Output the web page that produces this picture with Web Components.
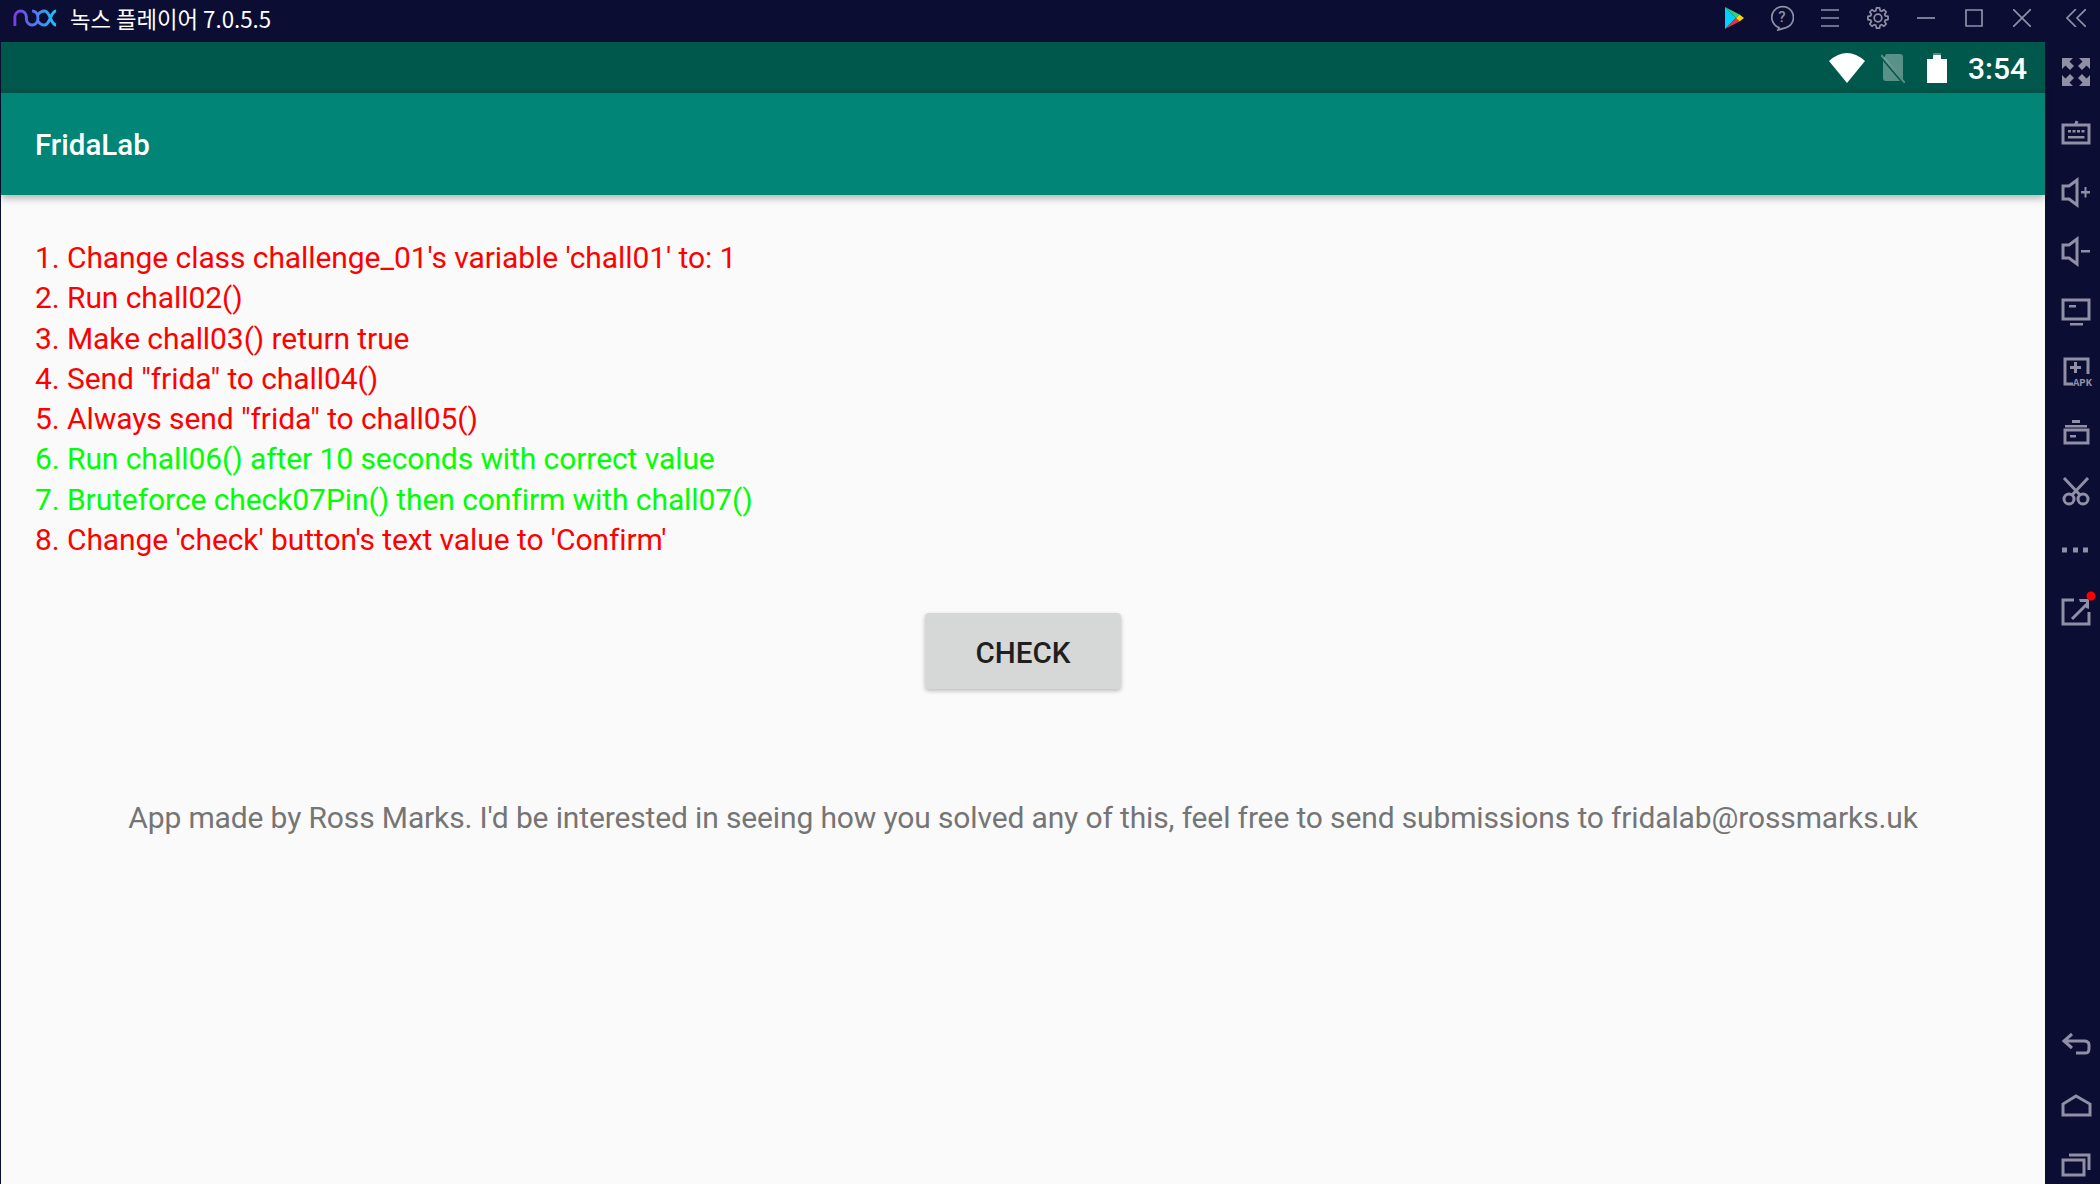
<!DOCTYPE html>
<html>
<head>
<meta charset="utf-8">
<style>
  html, body { margin: 0; height: 100%; background: #0c0d33; overflow: hidden; }
</style>
</head>
<body>
<nox-window>
  <title-bar slot="title" label="녹스 플레이어 7.0.5.5"></title-bar>
  <android-screen slot="screen">
    <status-bar time="3:54"></status-bar>
    <app-bar title="FridaLab"></app-bar>
    <lab-content>
      <challenge-line>1. Change class challenge_01's variable 'chall01' to: 1</challenge-line>
      <challenge-line>2. Run chall02()</challenge-line>
      <challenge-line>3. Make chall03() return true</challenge-line>
      <challenge-line>4. Send "frida" to chall04()</challenge-line>
      <challenge-line>5. Always send "frida" to chall05()</challenge-line>
      <challenge-line done>6. Run chall06() after 10 seconds with correct value</challenge-line>
      <challenge-line done>7. Bruteforce check07Pin() then confirm with chall07()</challenge-line>
      <challenge-line>8. Change 'check' button's text value to 'Confirm'</challenge-line>
      <span slot="note">App made by Ross Marks. I'd be interested in seeing how you solved any of this, feel free to send submissions to fridalab@rossmarks.uk</span>
    </lab-content>
  </android-screen>
  <side-bar slot="side"></side-bar>
</nox-window>

<script>
class NoxWindow extends HTMLElement {
  constructor() {
    super();
    this.attachShadow({ mode: "open" });
    this.shadowRoot.innerHTML = `
      <style>
        :host { display: flex; flex-direction: column; width: 2100px; height: 1184px; background: #0c0d33; overflow: hidden; }
        .body { flex: 1; display: flex; min-height: 0; }
        ::slotted([slot="screen"]) { flex: 1; }
      </style>
      <slot name="title"></slot>
      <div class="body">
        <slot name="screen"></slot>
        <slot name="side"></slot>
      </div>
    `;
  }
}

// outline of a gear, teeth around a centre
function gearPath(cx, cy, outer, inner, teeth) {
  const pts = [];
  const step = (Math.PI * 2) / teeth;
  for (let i = 0; i < teeth; i++) {
    const a = i * step - Math.PI / 2;
    [[-0.36, inner], [-0.2, outer], [0.2, outer], [0.36, inner]].forEach(([f, r]) => {
      const t = a + f * step;
      pts.push((cx + r * Math.cos(t)).toFixed(2) + " " + (cy + r * Math.sin(t)).toFixed(2));
    });
  }
  return "M" + pts.join("L") + "z";
}

class TitleBar extends HTMLElement {
  constructor() {
    super();
    this.attachShadow({ mode: "open" });
    this.shadowRoot.innerHTML = `
      <style>
        :host { display: flex; align-items: center; box-sizing: border-box; height: 42px; padding-bottom: 6px; background: #0c0d33; color: #fff; font: 22.300px/1 "Noto Sans CJK KR", "Noto Sans", sans-serif; }
        .logo { margin-left: 12px; width: 46px; height: 20px; }
        .label { margin-left: 12px; flex: 1; white-space: nowrap; }
        .btn { width: 48px; height: 36px; display: flex; align-items: center; justify-content: center; }
        .btn.last { width: 54px; padding-left: 6px; box-sizing: border-box; }
        svg { display: block; }
        .line { fill: none; stroke: #8f90a6; stroke-width: 1.7; }
      </style>
      <svg class="logo" viewBox="0 0 48 20" preserveAspectRatio="none">
        <defs><linearGradient id="nox" x1="0" x2="1" y1="0" y2="0">
          <stop offset="0" stop-color="#7a3fe0"/><stop offset=".55" stop-color="#4f7ff0"/><stop offset="1" stop-color="#19c4f5"/>
        </linearGradient></defs>
        <path fill="none" stroke="url(#nox)" stroke-width="3" d="M3 18V9a6 6 0 0 1 12 0v2a6 6 0 0 0 12 0V9a6 6 0 0 0-6-6M27 7c2-3 4-4 7-4M27 13c2 3 4 4 7 4M34 3c3 0 4 3 6 7s3 7 6 7M46 3c-3 0-4 3-6 7s-3 7-6 7"/>
      </svg>
      <span class="label"></span>
      <div class="btn"><svg width="20" height="22" viewBox="0 0 20 22">
        <path fill="#00d0ff" d="M1 0v22l11-11z"/><path fill="#33d17a" d="M1 0l11 11 3.500-3.500z"/><path fill="#e8323c" d="M1 22l11-11 3.500 3.500z"/><path fill="#ffd400" d="M15.500 7.500L20 11l-4.500 3.500L12 11z"/>
      </svg></div>
      <div class="btn"><svg width="24" height="26" viewBox="0 0 24 26">
        <path class="line" d="M9 22.500A10.800 10.800 0 1 1 16 22.600L8 25z"/>
        <text x="12" y="17" text-anchor="middle" font-family="Roboto" font-weight="500" font-size="15" fill="#8f90a6">?</text>
      </svg></div>
      <div class="btn"><svg width="18" height="18" viewBox="0 0 18 18"><path class="line" d="M0 1h18M0 9h18M0 17h18"/></svg></div>
      <div class="btn"><svg width="22" height="22" viewBox="0 0 22 22">
        <circle class="line" cx="11" cy="11" r="3.800"/>
        <path class="line" stroke-linejoin="round" d="${gearPath(11, 11, 10.2, 7.6, 8)}"/>
      </svg></div>
      <div class="btn"><svg width="18" height="4" viewBox="0 0 18 4"><path class="line" d="M0 2h18"/></svg></div>
      <div class="btn"><svg width="18" height="18" viewBox="0 0 18 18"><path class="line" d="M1 1h16v16H1z"/></svg></div>
      <div class="btn"><svg width="18" height="18" viewBox="0 0 18 18"><path class="line" d="M0 0l18 18M18 0L0 18"/></svg></div>
      <div class="btn last"><svg width="20" height="18" viewBox="0 0 20 18"><path class="line" stroke-width="1.800" d="M10 0L1 9l9 9M20 0l-9 9 9 9"/></svg></div>
    `;
    this.shadowRoot.querySelector(".label").textContent = this.getAttribute("label");
  }
}

class AndroidScreen extends HTMLElement {
  constructor() {
    super();
    this.attachShadow({ mode: "open" });
    this.shadowRoot.innerHTML = `
      <style>
        :host { display: flex; flex-direction: column; margin-left: 1px; min-width: 0; background: #fafafa; }
        ::slotted(lab-content) { flex: 1; }
      </style>
      <slot></slot>
    `;
  }
}

class StatusBar extends HTMLElement {
  constructor() {
    super();
    this.attachShadow({ mode: "open" });
    this.shadowRoot.innerHTML = `
      <style>
        :host { display: flex; align-items: center; justify-content: flex-end; height: 51px; padding-right: 18px; background: #00574b; color: #fff; font: 500 30px Roboto, sans-serif; }
        svg { display: block; }
        .wifi { margin-right: 16px; }
        .sim { margin-right: 22px; }
        .batt { margin-right: 21px; }
        .time { margin-top: 2px; }
      </style>
      <svg class="wifi" width="36" height="30" viewBox="0 0 36 30"><path fill="#fff" d="M0 8Q18-8 36 8L18 30z"/></svg>
      <svg class="sim" width="24" height="30" viewBox="0 0 24 30">
        <path fill="#fff" fill-opacity=".35" d="M5 1h14a3 3 0 0 1 3 3v22L3 5zM2 8l17 20H5a3 3 0 0 1-3-3z"/>
        <path stroke="#fff" stroke-opacity=".35" stroke-width="2" d="M0 2l24 28"/>
      </svg>
      <svg class="batt" width="20" height="30" viewBox="0 0 20 30"><path fill="#fff" d="M0 6h6V3q0-1 1-1h6q1 0 1 1v3h6v24H0z"/><path fill="#fff" fill-opacity=".3" d="M6 0h8v3H6z"/></svg>
      <span class="time"></span>
    `;
    this.shadowRoot.querySelector(".time").textContent = this.getAttribute("time");
  }
}

class AppBar extends HTMLElement {
  constructor() {
    super();
    this.attachShadow({ mode: "open" });
    this.shadowRoot.innerHTML = `
      <style>
        :host { display: flex; align-items: center; position: relative; height: 102px; padding-left: 34px; background: #008577; color: #fff; font: 500 29.500px Roboto, sans-serif; box-shadow: 0 3px 8px rgba(0,0,0,.3); }
        span { margin-top: 2px; }
      </style>
      <span></span>
    `;
    this.shadowRoot.querySelector("span").textContent = this.getAttribute("title");
  }
}

class LabContent extends HTMLElement {
  constructor() {
    super();
    this.attachShadow({ mode: "open" });
    this.shadowRoot.innerHTML = `
      <style>
        :host { display: flex; flex-direction: column; align-items: center; padding-top: 43px; font: 30px Roboto, sans-serif; }
        .list { align-self: stretch; padding-left: 34px; letter-spacing: -0.08px; }
        button { margin-top: 53px; padding: 3px 0 0; width: 196px; height: 76px; border: 0; border-radius: 4px; background: #d6d7d7; color: #1f1f1f; font: 500 29.600px Roboto, sans-serif; box-shadow: 0 2px 4px rgba(0,0,0,.25); }
        .note { margin-top: 111px; color: #757575; white-space: nowrap; letter-spacing: -0.14px; }
      </style>
      <div class="list"><slot></slot></div>
      <button>CHECK</button>
      <div class="note"><slot name="note"></slot></div>
    `;
  }
}

class ChallengeLine extends HTMLElement {
  constructor() {
    super();
    this.attachShadow({ mode: "open" });
    this.shadowRoot.innerHTML = `
      <style>
        :host { display: block; height: 40.25px; line-height: 40.25px; color: #ff0000; white-space: nowrap; }
        :host([done]) { color: #00ff00; }
      </style>
      <slot></slot>
    `;
  }
}

// icons sit in a 30x30 box, one unit is one px
const topIcons = [
  `<path fill="C" d="M1 1h11L8.500 4.500 13 9l-4 4-4.500-4.500L1 12zM29 1H18l3.500 3.500L17 9l4 4 4.500-4.500L29 12zM1 29h11l-3.500-3.500L13 21l-4-4-4.500 4.500L1 18zM29 29H18l3.500-3.500L17 21l4-4 4.500 4.500L29 18z"/>`,
  `<path class="s" d="M2 8h26v18H2zM16 4l-1.500 4"/><path fill="C" d="M7 13h3v2.500H7zM11.500 13h3v2.500h-3zM16 13h3v2.500h-3zM20.500 13h3v2.500h-3zM7 19h16.500v2.500H7z"/>`,
  `<path class="s" d="M2 9h6l8-6v25l-8-6H2z"/><path fill="C" d="M20 14h3.500v-4h2v4H29v2.500h-3.500v4h-2v-4H20z"/>`,
  `<path class="s" d="M2 9h6l8-6v25l-8-6H2z"/><path fill="C" d="M20 14h9v2.500h-9z"/>`,
  `<path class="s" d="M2 4h26v19H2z"/><path fill="C" d="M8 9h7v2.500H8zM9 27h13v2.500H9z"/>`,
  `<path class="s" d="M27 18V3H4v25h8"/><path fill="C" d="M13 6h3v4h4v3h-4v4h-3v-4H9v-3h4z"/><text x="12" y="30" font-family="Liberation Mono" font-size="11.500" font-weight="700" fill="C" textLength="19" lengthAdjust="spacingAndGlyphs">APK</text>`,
  `<path fill="C" d="M11 4h8v3h-8zM4 9h22v2.500H4z"/><path class="s" d="M4 14h23v13H4z"/><path fill="C" d="M9 19h6v2.500H9z"/>`,
  `<circle class="s" cx="8" cy="23" r="5"/><circle class="s" cx="22" cy="23" r="5"/><path class="s" d="M3 2l16 17M27 2L11 19"/>`,
  `<path fill="C" d="M1 12.500h5v5H1zM12 12.500h5v5h-5zM22 12.500h5v5h-5z"/>`,
  `<path class="s" d="M13 5H2v24h26V17"/><path class="s" d="M11 24L27 8"/><path fill="C" d="M18 4h10v10l-3-1V7h-6z"/><circle cx="30" cy="1" r="4.500" fill="#ff0000"/>`,
];
const bottomIcons = [
  `<path class="s" d="M11 6L3 13l8 7M3 13h20q5 0 5 4v3q0 5-3 5H15"/>`,
  `<path class="s" d="M15 7L29 15v11H2V15z"/>`,
  `<path class="s" d="M2 10h21v15H2z"/><path class="s" d="M8 5h20v15"/>`,
];

class SideBar extends HTMLElement {
  constructor() {
    super();
    this.attachShadow({ mode: "open" });
    const toSvg = (body) => `<svg width="30" height="30" viewBox="0 0 30 30">${body.replaceAll('"C"', '"#8f90a6"')}</svg>`;
    this.shadowRoot.innerHTML = `
      <style>
        :host { display: flex; flex-direction: column; justify-content: space-between; flex: none; width: 55px; box-sizing: border-box; padding-left: 16px; background: #0c0d33; }
        .group { display: flex; flex-direction: column; }
        .top { gap: 29.800px; padding-top: 15px; }
        .bottom { gap: 31px; padding-bottom: 4px; }
        svg { display: block; overflow: visible; }
        .s { fill: none; stroke: #8f90a6; stroke-width: 3; }
      </style>
      <div class="group top">${topIcons.map(toSvg).join("")}</div>
      <div class="group bottom">${bottomIcons.map(toSvg).join("")}</div>
    `;
  }
}

customElements.define("nox-window", NoxWindow);
customElements.define("title-bar", TitleBar);
customElements.define("android-screen", AndroidScreen);
customElements.define("status-bar", StatusBar);
customElements.define("app-bar", AppBar);
customElements.define("lab-content", LabContent);
customElements.define("challenge-line", ChallengeLine);
customElements.define("side-bar", SideBar);
</script>
</body>
</html>
